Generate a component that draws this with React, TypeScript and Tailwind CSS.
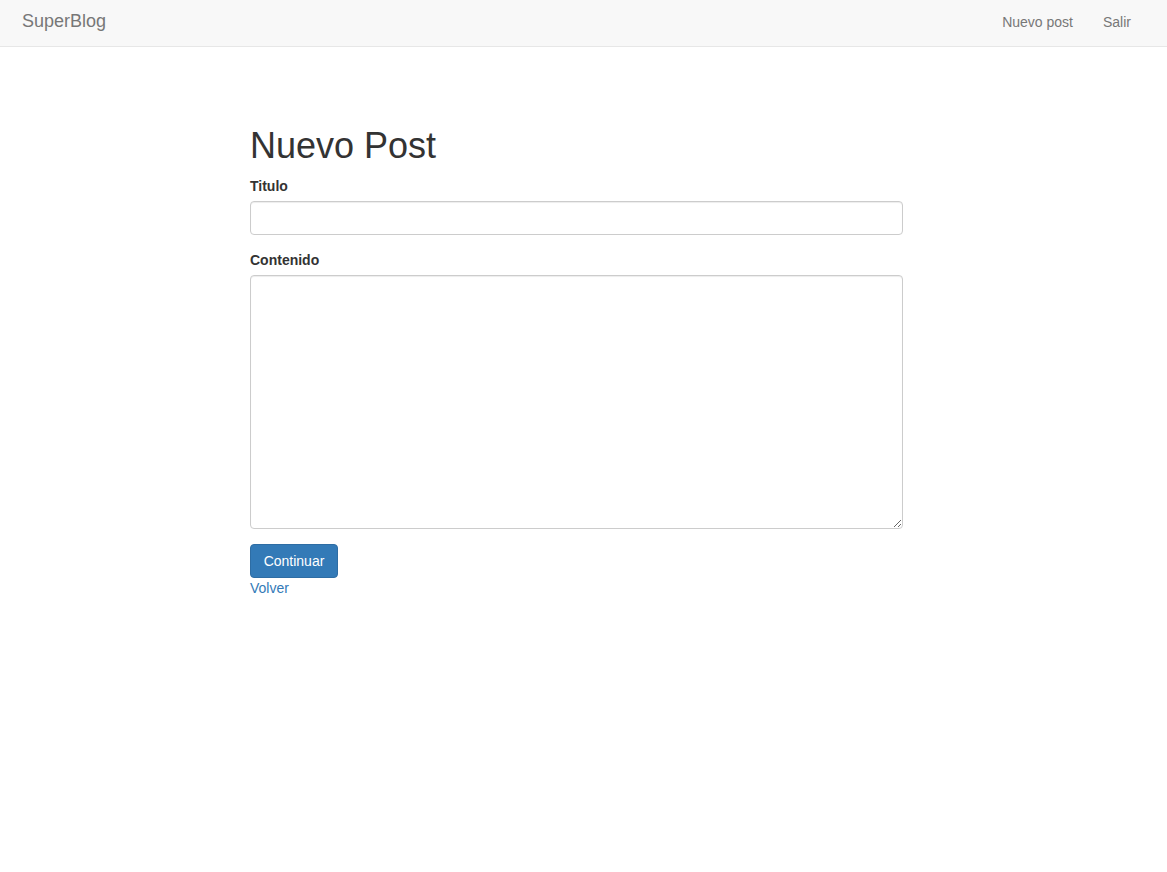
export default function App() {
  return (
    <div className="min-h-screen bg-white text-[14px] leading-[20px] text-[#333] font-['Liberation_Sans',Arial,sans-serif]">
      <nav className="h-[47px] bg-[#f8f8f8] border-b border-[#e7e7e7] flex items-center justify-between pl-[22px] pr-[36px]">
        <a href="#" className="text-[18px] leading-[20px] text-[#777] -mt-[4px]">
          SuperBlog
        </a>
        <div className="flex items-center gap-[30px] text-[#777] -mt-[2px]">
          <a href="#">Nuevo post</a>
          <a href="#">Salir</a>
        </div>
      </nav>

      <main className="ml-[250px] w-[653px] pt-[79px]">
        <h1 className="text-[36px] leading-[39.6px] font-normal mb-[10px]">Nuevo Post</h1>
        <form onSubmit={(e) => e.preventDefault()}>
          <div className="mb-[15px]">
            <label className="block font-bold mb-[5px]">Titulo</label>
            <input
              type="text"
              className="block w-full h-[34px] px-3 border border-[#ccc] rounded-[4px] shadow-[inset_0_1px_1px_rgba(0,0,0,0.075)] outline-none"
            />
          </div>
          <div className="mb-[15px]">
            <label className="block font-bold mb-[5px]">Contenido</label>
            <textarea className="block w-full h-[254px] px-3 py-[6px] border border-[#ccc] rounded-[4px] shadow-[inset_0_1px_1px_rgba(0,0,0,0.075)] outline-none" />
          </div>
          <button
            type="submit"
            className="h-[34px] w-[88px] bg-[#337ab7] border border-[#2e6da4] rounded-[4px] text-white"
          >
            Continuar
          </button>
        </form>
        <a href="#" className="block w-fit text-[#337ab7]">
          Volver
        </a>
      </main>
    </div>
  );
}
